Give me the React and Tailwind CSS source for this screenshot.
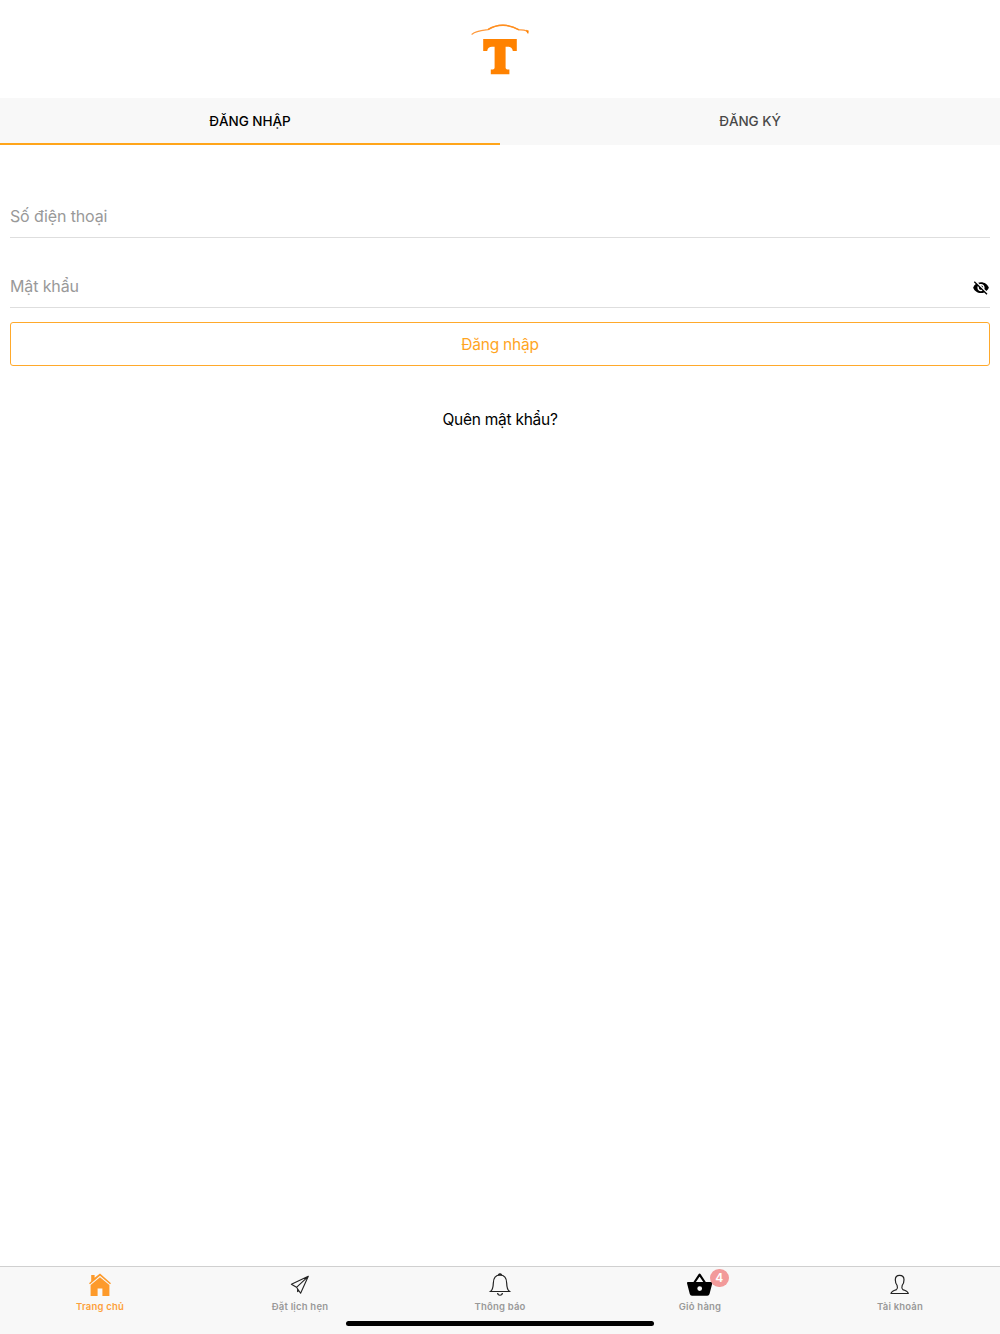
import React from "react";
import { IoMdEyeOff } from "react-icons/io";

function Logo() {
  return (
    <svg width="60" height="54" viewBox="470 22 60 54" className="block">
      <path d="M472 34.2C476 30.8 482 30.4 488 29.6C493 26.3 497 25.2 503 25.2C510 25.3 514 27.2 519 29.8C523 30 527.8 29.5 528 33" fill="none" stroke="#ff9a3c" strokeWidth="1.2" strokeLinecap="round" />
      <path d="M488 29.6C493 26.3 497 25.2 503 25.2C510 25.3 514 27.2 519 29.8" fill="none" stroke="#ff8f20" strokeWidth="1.5" />
      <path d="M526.2 29.8L528.8 30.8L528 33.6L526.6 32Z" fill="#ff8200" />
      <path d="M483.2 39H516.8V51H512.8C512.4 48 510.6 46.8 508 46.8H505.6V67.6C505.6 68.8 506.2 69.4 507.4 69.4H509.4V74.2H490.8V69.4H492.8C494 69.4 494.6 68.8 494.6 67.6V46.8H492C489.4 46.8 487.6 48 487.2 51H483.2Z" fill="#ff8200" />
    </svg>
  );
}

function HomeIcon() {
  return (
    <svg width="24" height="24" viewBox="88 1273 24 24" fill="#fd9a2b">
      <path d="M91.2 1275H94.6V1277.8L100 1273.6L111 1283.2L110 1284.3L100 1275.8L90 1284.3L89 1283.2L91.2 1281.2Z" />
      <path d="M100 1277.2L109.4 1285V1295.9H102.4V1288.4H97.6V1295.9H90.6V1285Z" />
    </svg>
  );
}

function PlaneIcon() {
  return (
    <svg width="24" height="24" viewBox="288 1273 24 24" fill="none" stroke="#222" strokeWidth="1.1" strokeLinejoin="round">
      <path d="M308.3 1276.3L291.4 1284.2L296.5 1287.3L300.6 1293.2ZM308.3 1276.3L296.5 1287.3M297.6 1288.4V1291.6L299.2 1290.6" />
    </svg>
  );
}

function BellIcon() {
  return (
    <svg width="24" height="24" viewBox="488 1273 24 24" fill="none" stroke="#222" strokeWidth="1.2">
      <path d="M490.5 1291.5H509.5C507.6 1290 506.8 1287.5 506.7 1283.2C506.6 1277.8 504.2 1275 500 1275C495.8 1275 493.4 1277.8 493.3 1283.2C493.2 1287.5 492.4 1290 490.5 1291.5Z" />
      <path d="M498.4 1275C498.6 1273.4 501.4 1273.4 501.6 1275Z" fill="#222" />
      <path d="M497.6 1293C497.9 1296 502.1 1296 502.4 1293" />
    </svg>
  );
}

function BasketIcon() {
  return (
    <svg width="28" height="24" viewBox="686 1273 28 24" className="overflow-visible">
      <path d="M694 1283L699.6 1274.7L705.2 1283" fill="none" stroke="#000" strokeWidth="2.2" strokeLinejoin="round" />
      <path fillRule="evenodd" fill="#000" d="M688 1282H711.4Q712.6 1282 712.3 1283.2L709.5 1294Q709.1 1295.8 707.3 1295.8H692Q690.2 1295.8 689.8 1294L687 1283.2Q686.8 1282 688 1282ZM699.7 1286.2A2.4 2.4 0 1 0 699.7 1291A2.4 2.4 0 1 0 699.7 1286.2Z" />
    </svg>
  );
}

function UserIcon() {
  return (
    <svg width="24" height="24" viewBox="888 1273 24 24" fill="none" stroke="#222" strokeWidth="1.2" strokeLinejoin="round">
      <path d="M899.6 1275.4C896.8 1275.4 895.3 1277.4 895.3 1279.8C895.3 1282.5 896 1284.2 897.1 1285.4C897.6 1287 897.5 1288.7 896.6 1289.4C895 1290.5 891.4 1290.7 891 1293.5H908.3C907.9 1290.7 904.3 1290.5 902.7 1289.4C901.8 1288.7 901.7 1287 902.2 1285.4C903.3 1284.2 904 1282.5 904 1279.8C904 1277.4 902.4 1275.4 899.6 1275.4Z" />
    </svg>
  );
}

const tabs = [
  { label: "Trang chủ", Icon: HomeIcon, color: "text-[#fda03a]" },
  { label: "Đặt lịch hẹn", Icon: PlaneIcon, color: "text-[#999]" },
  { label: "Thông báo", Icon: BellIcon, color: "text-[#999]" },
  { label: "Giỏ hàng", Icon: BasketIcon, color: "text-[#999]", badge: 4 },
  { label: "Tài khoản", Icon: UserIcon, color: "text-[#999]" },
];

export default function App() {
  return (
    <div className="flex h-[1334px] w-full flex-col bg-white font-['Inter','Liberation_Sans',sans-serif] text-black">
      <header className="flex h-[98px] justify-center pt-[22px]">
        <Logo />
      </header>

      <nav className="grid h-[47px] grid-cols-2 bg-[#f8f8f8] text-[13.5px] font-medium">
        <button className="flex items-center justify-center border-b-2 border-[#ffa51a] pt-px tracking-[-0.05px]">
          <span>ĐĂNG NHẬP</span>
        </button>
        <button className="flex items-center justify-center border-b-2 border-transparent pt-px tracking-[-0.05px] text-[#484848]">
          <span>ĐĂNG KÝ</span>
        </button>
      </nav>

      <main className="flex flex-1 flex-col px-2.5 pt-[50px] text-base">
        <div className="flex h-[43px] items-center border-b border-[#dedede] text-[#999]">
          <span className="tracking-[-0.15px]">Số điện thoại</span>
        </div>
        <div className="mt-[27px] flex h-[43px] items-center justify-between border-b border-[#dedede] text-[#999]">
          <span className="tracking-[-0.12px]">Mật khẩu</span>
          <IoMdEyeOff className="mt-[3px] size-[18px] text-black" />
        </div>
        <button className="mt-3.5 flex h-11 items-center justify-center rounded-[3px] border border-[#ffa92b] pt-0.5 text-[15.5px] text-[#ffa51f]">
          <span className="tracking-[-0.22px]">Đăng nhập</span>
        </button>
        <a className="mt-[42px] self-center text-[15.5px] leading-6 tracking-[-0.25px]">
          Quên mật khẩu?
        </a>
      </main>

      <footer className="flex h-[68px] flex-col items-center border-t border-[#d0d0d0] bg-[#f8f8f8]">
        <div className="grid h-[54px] w-full grid-cols-5 pt-1.5">
          {tabs.map(({ label, Icon, color, badge }) => (
            <div key={label} className={`flex flex-col items-center ${color}`}>
              <div className="relative h-6">
                <Icon />
                {badge && (
                  <span className="absolute -top-1 left-[23.5px] flex h-[18px] w-[19.5px] items-center justify-center rounded-full bg-[#f29a9a] text-xs font-semibold text-white">
                    {badge}
                  </span>
                )}
              </div>
              <span className="mt-[3px] text-[9.5px] leading-[14px] font-semibold tracking-[0.2px]">{label}</span>
            </div>
          ))}
        </div>
        <div className="h-[5px] w-[308px] rounded-full bg-black" />
      </footer>
    </div>
  );
}
